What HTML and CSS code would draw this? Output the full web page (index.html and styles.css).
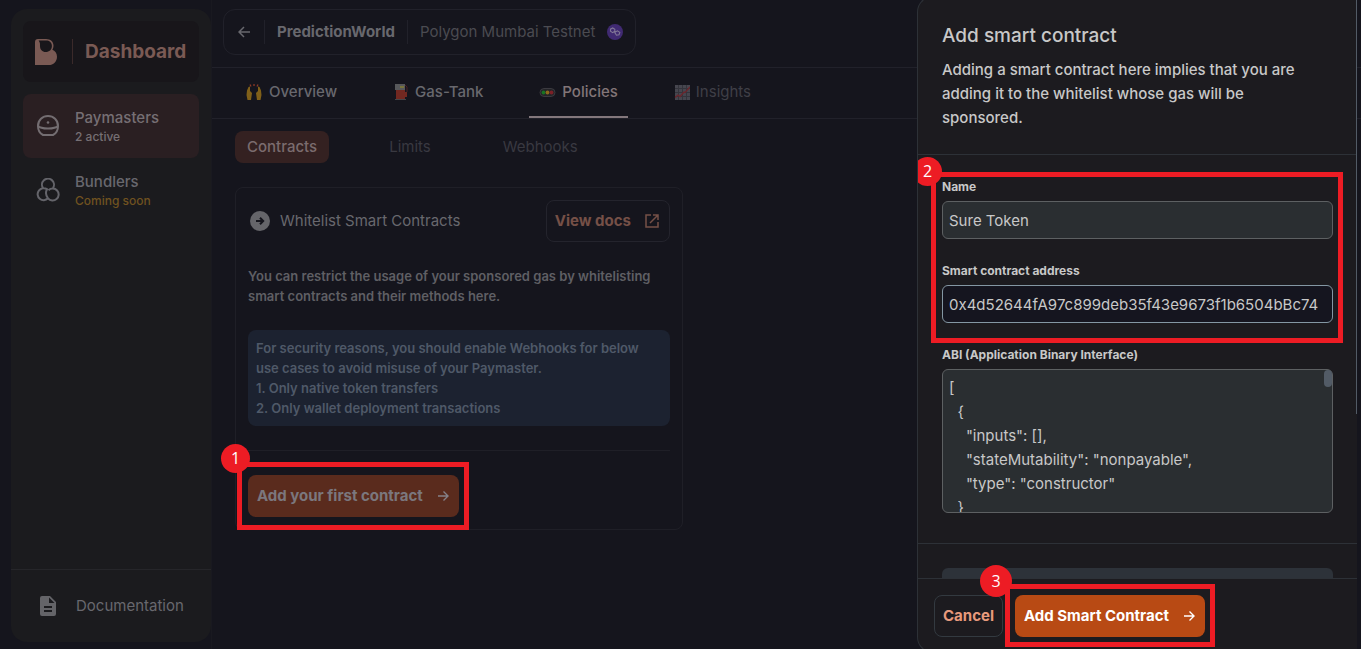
FILE: index.html
```html
<!DOCTYPE html>
<html lang="en">
<head>
<meta charset="utf-8">
<title>Dashboard</title>
<link rel="stylesheet" href="styles.css">
</head>
<body>
<div class="app">
  <aside class="sidebar">
    <div class="brand">
      <svg class="brand-logo" width="22" height="26" viewBox="0 0 22 26" aria-hidden="true"><path fill="#7a5a54" fill-rule="evenodd" d="M0 3Q0 0 3 0H11C15.500 0 18.500 2.800 18.500 6.500C18.500 8.300 18 9.700 17.300 10.800C20 11.800 22 14.400 22 17.700C22 22.500 18.500 26 13.700 26H0ZM3.600 1.500C5.200 3.500 5 5 5 7C5 10.500 7.300 13 10.700 13C14.200 13 16.900 10.700 16.900 7C16.900 3.500 14.400 1.500 11 1.500Z"/></svg>
      <span class="brand-rule"></span>
      <span class="brand-name">Dashboard</span>
    </div>
    <nav class="side-nav">
      <a class="side-link side-link-active" href="#">
        <svg width="24" height="24" viewBox="0 0 24 24" fill="none" stroke="#736d71" stroke-width="2" stroke-linejoin="round" aria-hidden="true"><path d="M7 21H17C20 19.500 22 16 22 12C22 6 17.500 2 12 2S2 6 2 12C2 16 4 19.500 7 21Z"/><path d="M2 12C5 15.300 19 15.300 22 12"/><circle cx="12" cy="8.500" r="1.300" fill="#736d71" stroke="none"/></svg>
        <span class="side-text"><span>Paymasters</span><small>2 active</small></span>
      </a>
      <a class="side-link" href="#">
        <svg width="24" height="24" viewBox="0 0 24 24" fill="none" stroke="#64646a" stroke-width="2" aria-hidden="true"><path d="M7.100 10.200A6 6 0 1 1 17 10M12 20.300A6 6 0 1 1 11 11.200C9.500 14 9.800 17.500 12 20.300A6 6 0 1 0 12.500 12.200"/></svg>
        <span class="side-text"><span>Bundlers</span><small class="soon">Coming soon</small></span>
      </a>
    </nav>
    <a class="docs-link" href="#">
      <svg width="24" height="24" viewBox="0 0 24 24" aria-hidden="true"><path fill="#646468" d="M14 2H6a2 2 0 0 0-2 2v16a2 2 0 0 0 2 2h12a2 2 0 0 0 2-2V8zm2 16H8v-2h8zm0-4H8v-2h8zm-3-5V3.500L18.500 9z"/></svg>
      <span>Documentation</span>
    </a>
  </aside>

  <main class="main">
    <header class="topbar">
      <div class="crumbs">
        <button class="back" type="button" aria-label="Back"><svg width="12" height="12" viewBox="0 0 12 12" fill="none" stroke="#68686e" stroke-width="1.500"><path d="M12 6H1.500M6 1L1 6L6 11"/></svg></button>
        <strong class="crumb-name">PredictionWorld</strong>
        <span class="crumb-net">Polygon Mumbai Testnet
          <svg width="16" height="16" viewBox="0 0 16 16" aria-hidden="true"><circle cx="8" cy="8" r="8" fill="#402a72"/><path fill="none" stroke="#817797" stroke-width="1.100" d="M7.700 7.300L5.700 8.600L3.500 7.300V5.200L5.700 4L7.800 5.200V8.600L9.500 11.200L12 10.700L12.800 8.400L10.500 6.800L8.200 8"/></svg>
        </span>
      </div>
    </header>

    <nav class="tabs">
      <a class="tab" href="#"><svg width="18" height="18" viewBox="0 0 18 18" aria-hidden="true"><path fill="#806019" d="M2 7.500L3.500 4L5 3.500V8L7 10L6 17H2.500L1.500 12ZM16 7.500L14.500 4L13 3.500V8L11 10L12 17H15.500L16.500 12Z"/><path stroke="#8c3925" stroke-width="1.300" d="M9 1V3M5 1.500L6 3.500M13 1.500L12 3.500"/></svg>Overview</a>
      <a class="tab" href="#"><svg width="16" height="18" viewBox="0 0 16 18" aria-hidden="true"><path fill="#57585b" d="M2 1H12V7H2Z"/><path fill="#722821" d="M3 7H12V16H3ZM12 9H14V14H12Z"/><path fill="#454548" d="M2 16H13V17H2Z"/><path fill="#77733b" d="M7 3H11V5H7Z"/><path fill="none" stroke="#4d2225" d="M12 2L14 4V9"/></svg>Gas-Tank</a>
      <a class="tab tab-active" href="#"><svg width="17" height="17" viewBox="0 0 17 17" aria-hidden="true"><rect x="1" y="4.500" width="15" height="8" rx="4" fill="#242428" stroke="#3b3a40"/><circle cx="4.500" cy="8.500" r="1.900" fill="#187323"/><circle cx="8.500" cy="8.500" r="1.900" fill="#8a681d"/><circle cx="12.500" cy="8.500" r="1.900" fill="#7b2027"/></svg>Policies</a>
      <a class="tab tab-off" href="#"><svg width="16" height="16" viewBox="0 0 16 16" aria-hidden="true"><path fill="#46464f" d="M1 1H16V16H1Z"/><path stroke="#34343c" d="M4.500 1V16M8.500 1V16M12.500 1V16M1 4.500H16M1 8.500H16M1 12.500H16"/><path fill="none" stroke="#6c252c" stroke-width="1.300" d="M1 13.500L4 11L6 12.500L10 8L11 8.500L16 3"/></svg>Insights</a>
    </nav>

    <div class="content">
      <nav class="subtabs">
        <a class="subtab subtab-active" href="#">Contracts</a>
        <a class="subtab" href="#">Limits</a>
        <a class="subtab" href="#">Webhooks</a>
      </nav>

      <section class="card">
        <div class="card-head">
          <svg width="24" height="24" viewBox="0 0 24 24" aria-hidden="true"><circle cx="12" cy="12" r="10" fill="#65656a"/><path fill="none" stroke="#15151d" stroke-width="2" d="M8 12H15M12 8.800L15.200 12L12 15.200"/></svg>
          <h2 class="card-title">Whitelist Smart Contracts</h2>
          <a class="btn btn-outline view-docs" href="#">View docs <svg width="18" height="18" viewBox="0 0 18 18" fill="none" stroke="#755047" stroke-width="1.500" aria-hidden="true"><path d="M8 3H3V15H15V10M10 3H15V8M15 3L7 11"/></svg></a>
        </div>
        <p class="card-text">You can restrict the usage of your sponsored gas by whitelisting smart contracts and their methods here.</p>
        <div class="note">For security reasons, you should enable Webhooks for below use cases to avoid misuse of your Paymaster.<br>1. Only native token transfers<br>2. Only wallet deployment transactions</div>
        <div class="card-foot">
          <div class="mark mark-1">
            <button class="btn btn-dim" type="button">Add your first contract <svg width="14" height="14" viewBox="0 0 14 14" fill="none" stroke="#858188" stroke-width="1.400" aria-hidden="true"><path d="M2 7H12M7.500 2.500L12 7L7.500 11.500"/></svg></button>
            <span class="mark-box"></span><span class="mark-num">1</span>
          </div>
        </div>
      </section>
    </div>
  </main>
</div>

<div class="drawer" role="dialog" aria-labelledby="drawer-title">
  <header class="drawer-head">
    <h1 class="drawer-title" id="drawer-title">Add smart contract</h1>
    <p class="drawer-text">Adding a smart contract here implies that you are adding it to the whitelist whose gas will be sponsored.</p>
  </header>
  <div class="drawer-body">
    <div class="fields">
      <div class="mark mark-2">
        <div class="field">
          <label for="name">Name</label>
          <input class="control" id="name" type="text" value="Sure Token">
        </div>
        <div class="field">
          <label for="address">Smart contract address</label>
          <input class="control control-focus" id="address" type="text" value="0x4d52644fA97c899deb35f43e9673f1b6504bBc74">
        </div>
        <span class="mark-box"></span><span class="mark-num">2</span>
      </div>
      <div class="field">
        <label for="abi">ABI (Application Binary Interface)</label>
        <div class="area">
          <textarea class="control control-area" id="abi" spellcheck="false">[
  {
    "inputs": [],
    "stateMutability": "nonpayable",
    "type": "constructor"
  }
]</textarea>
          <span class="area-thumb"></span>
        </div>
      </div>
    </div>
    <div class="more"><div class="more-bar"></div></div>
  </div>
  <footer class="drawer-foot">
    <button class="btn btn-outline cancel" type="button">Cancel</button>
    <div class="mark mark-3">
      <button class="btn btn-primary" type="button">Add Smart Contract <svg width="14" height="14" viewBox="0 0 14 14" fill="none" stroke="#fff" stroke-width="1.400" aria-hidden="true"><path d="M2 7H12M7.500 2.500L12 7L7.500 11.500"/></svg></button>
      <span class="mark-box"></span><span class="mark-num">3</span>
    </div>
  </footer>
  <span class="drawer-thumb"></span>
</div>
</body>
</html>
```
FILE: styles.css
```css
* { box-sizing: border-box; }
html, body { height: 100%; }
body {
  margin: 0;
  position: relative;
  overflow: hidden;
  background: #15151d;
  color: #68686e;
  font: 15px/24px Inter, sans-serif;
}
a { color: inherit; text-decoration: none; }
button, input, textarea { font: inherit; color: inherit; margin: 0; }
h1, h2, p { margin: 0; }
svg { flex: none; }

.app { display: flex; height: 100%; }

/* Sidebar */
.sidebar {
  flex: none;
  width: 200px;
  margin: 9px 0 7px 11px;
  display: flex;
  flex-direction: column;
  border-radius: 16px;
  background: #1b1b1e;
}
.brand {
  display: flex;
  align-items: center;
  gap: 12px;
  height: 61px;
  margin: 12px;
  padding: 0 12px;
  border-radius: 8px;
  background: #18161a;
  color: #7a5a54;
}
.brand-rule { width: 1px; height: 25px; margin-left: 3px; background: #3b2a2a; }
.brand-name { font-size: 19px; font-weight: 700; }
.side-nav { flex: 1; padding: 0 12px; }
.side-link {
  display: flex;
  align-items: center;
  gap: 15px;
  height: 64px;
  padding: 0 13px;
  border-radius: 8px;
  font-weight: 500;
}
.side-link-active { background: #2a1f22; color: #766f74; }
.side-text { display: flex; flex-direction: column; line-height: 22px; }
.side-text small { font-size: 12px; line-height: 16px; }
.soon { color: #705220; }
.docs-link {
  display: flex;
  align-items: center;
  gap: 16px;
  height: 73px;
  padding: 0 25px;
  border-top: 1px solid #26262a;
}

/* Main column */
.main { flex: 1; min-width: 0; border-left: 1px solid #191920; }
.topbar { display: flex; height: 68px; padding: 9px 11px; border-bottom: 1px solid #21212a; }
.crumbs {
  display: flex;
  align-items: center;
  height: 46px;
  padding-right: 12px;
  border: 1px solid #21212a;
  border-radius: 12px;
}
.back { display: flex; padding: 6px 14px; border: 0; background: none; }
.crumb-name { padding: 0 12px; border: solid #21212a; border-width: 0 1px; font-weight: 700; }
.crumb-net { display: flex; align-items: center; gap: 12px; padding-left: 12px; color: #4b4b51; }
.tabs { display: flex; gap: 36px; height: 51px; padding: 0 23px; border-bottom: 1px solid #21212a; }
.tab { display: flex; align-items: center; gap: 6px; padding: 0 10px; font-weight: 500; border-bottom: 2px solid transparent; }
.tab-active { border-color: #83777c; color: #827578; }
.tab-off { color: #3f3f47; font-weight: 400; }

.content { padding: 12px 23px; }
.subtabs { display: flex; gap: 48px; }
.subtab { padding: 4px 12px; border-radius: 8px; color: #393941; }
.subtab-active { background: #342121; color: #7b6c6e; font-weight: 500; }

.card {
  width: 448px;
  margin-top: 24px;
  padding: 12px;
  border: 1px solid #1f1f27;
  border-radius: 8px;
}
.card-head { display: flex; align-items: center; gap: 8px; }
.card-title { flex: 1; font-size: 15px; font-weight: 400; }
.btn {
  display: inline-flex;
  align-items: center;
  gap: 12px;
  height: 42px;
  padding: 0 8px;
  border: 1px solid transparent;
  border-radius: 8px;
  font-weight: 700;
}
.btn-outline { background: none; border-color: #24242d; }
.view-docs { color: #755047; }
.card-text { margin-top: 24px; font-size: 13px; line-height: 20px; font-weight: 600; color: #5f5f64; }
.note {
  margin-top: 24px;
  padding: 8px;
  border-radius: 8px;
  background: #1c2230;
  color: #4f5968;
  font-size: 13px;
  line-height: 20px;
  font-weight: 600;
}
.card-foot { display: flex; margin-top: 24px; padding-top: 24px; border-top: 1px solid #1f1f27; }
.btn-dim { background: #5a2b1d; color: #7b777d; gap: 13px; }

/* Numbered marks over the controls */
.mark { position: relative; }
.mark-box { position: absolute; border: 5px solid #ed1c24; pointer-events: none; }
.mark-num {
  position: absolute;
  width: 29px;
  height: 29px;
  border-radius: 50%;
  background: #ed1c24;
  color: #fff;
  font: 16px/29px "Open Sans", sans-serif;
  text-align: center;
}
.mark-1 .mark-box { inset: -13px -10px -13px -11px; }
.mark-1 .mark-num { left: -27px; top: -31px; }
.mark-2 .mark-box { inset: -7px -10px -20px -11px; }
.mark-2 .mark-num { left: -29px; top: -22px; }
.mark-3 .mark-box { inset: -11px -10px -10px -10px; }
.mark-3 .mark-num { left: -35px; top: -30px; width: 32px; height: 32px; line-height: 32px; }

/* Drawer */
.drawer {
  position: absolute;
  top: -4px;
  right: 4px;
  bottom: -4px;
  width: 440px;
  display: flex;
  flex-direction: column;
  overflow: hidden;
  border: 1px solid #2d3137;
  border-radius: 16px;
  border-right-width: 0;
  border-top-right-radius: 0;
  border-bottom-right-radius: 0;
  background: #1c1b1f;
  color: #c8c8c8;
}
.drawer-head { padding: 27px 48px 24px 24px; border-bottom: 1px solid #2d3137; }
.drawer-title { font-size: 19px; line-height: 24px; font-weight: 500; }
.drawer-text { margin-top: 10px; font-weight: 500; }
.drawer-body { flex: 1; min-height: 0; overflow: hidden; }
.fields, .mark-2 { display: flex; flex-direction: column; gap: 24px; }
.fields { padding: 24px 24px 30px; border-bottom: 1px solid #2d3137; }
.field { display: flex; flex-direction: column; gap: 6px; }
.field label { font-size: 12px; line-height: 16px; font-weight: 700; }
.control {
  width: 100%;
  height: 38px;
  padding: 0 6px;
  border: 1px solid #5d6062;
  border-radius: 6px;
  outline: 0;
  background: #2a2e31;
}
.control-focus { background: #15151f; border-color: #8497a3; }
.area { position: relative; }
.control-area { display: block; height: 144px; padding: 6px; resize: none; overflow: hidden; }
.area-thumb { position: absolute; top: 1px; right: 1px; width: 8px; height: 17px; border-radius: 4px; background: #525b66; }
.more { padding: 24px; }
.more-bar { height: 44px; border-radius: 6px; background: #2d3239; }
.drawer-foot {
  display: flex;
  align-items: flex-start;
  gap: 12px;
  padding: 16px 16px 15px;
  border-top: 1px solid #2d3137;
}
.cancel { color: #e89a7c; border-color: #333a40; }
.btn-primary { background: #b84a14; color: #fff; gap: 13px; }
.drawer-thumb { position: absolute; top: 0; right: 0; width: 1px; height: 417px; background: #525b66; }
```
